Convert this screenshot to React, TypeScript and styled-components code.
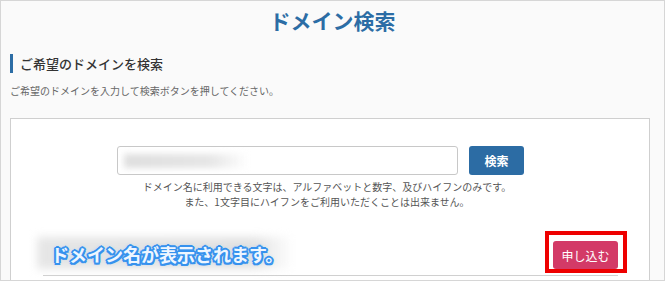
import styled, { createGlobalStyle } from 'styled-components';

const GlobalStyle = createGlobalStyle`
  html, body {
    margin: 0;
    padding: 0;
    background: #fafafa;
  }
  body {
    font-family: "Noto Sans CJK JP", "Noto Sans", sans-serif;
  }
`;

const Page = styled.div`
  box-sizing: border-box;
  width: 665px;
  height: 281px;
  overflow: hidden;
  border: 1px solid #d6d6d6;
  background: #fafafa;
  padding: 0 14px 0 9px;
`;

const Title = styled.h1`
  margin: 7px 0 0;
  font-size: 21px;
  line-height: 25px;
  font-weight: bold;
  color: #2c6da5;
  text-align: center;
  padding-left: 5px;
`;

const Heading = styled.h2`
  margin: 21px 0 0;
  border-left: 3px solid #2c6da5;
  padding-left: 7px;
  font-size: 13px;
  line-height: 19px;
  font-weight: 500;
  color: #333;
`;

const Lead = styled.p`
  margin: 11px 0 0;
  font-size: 10px;
  line-height: 14px;
  color: #666;
`;

const Box = styled.section`
  margin-top: 20px;
  background: #fff;
  border: 1px solid #cfcfcf;
  padding-top: 27px;
  height: 200px;
`;

const SearchRow = styled.div`
  display: flex;
  justify-content: center;
  gap: 11px;
  padding-right: 19px;
`;

const Field = styled.div`
  box-sizing: border-box;
  width: 341px;
  height: 29px;
  border: 1px solid #c8c8c8;
  border-radius: 3px;
  background: #fff;
  display: flex;
  align-items: center;
  padding-left: 6px;
  overflow: hidden;
`;

const Blurred = styled.div`
  width: 124px;
  height: 14px;
  background: linear-gradient(90deg, #dedede, #e6e6e6 70%, rgba(240, 240, 240, 0));
  filter: blur(3px);
`;

const Button = styled.button<{ $tone: 'blue' | 'pink' }>`
  box-sizing: border-box;
  border: none;
  border-radius: 3px;
  color: #fff;
  font-family: inherit;
  font-size: 12px;
  font-weight: ${({ $tone }) => ($tone === 'blue' ? 'bold' : 'normal')};
  background: ${({ $tone }) => ($tone === 'blue' ? '#2c6ca4' : '#d33a67')};
  width: ${({ $tone }) => ($tone === 'blue' ? '55px' : '65px')};
  height: ${({ $tone }) => ($tone === 'blue' ? '29px' : '28px')};
  padding: 0;
  cursor: pointer;
`;

const Notes = styled.div`
  margin-top: 4px;
  padding-right: 6px;
  text-align: center;
  font-size: 10px;
  line-height: 15px;
  color: #555;
`;

const ResultRow = styled.div`
  margin: 32px 31px 0 32px;
  padding: 0 0 6px 8px;
  border-bottom: 1px solid #d0d0d0;
  display: flex;
  align-items: center;
  justify-content: space-between;
`;

const SampleWrap = styled.div`
  position: relative;
  z-index: 0;
`;

const Sample = styled.span`
  position: relative;
  margin-top: -5px;
  font-size: 18px;
  line-height: 22px;
  font-weight: bold;
  color: #eef6ff;
  text-shadow:
    2px 0 0 #3692ee, -2px 0 0 #3692ee, 0 2px 0 #3692ee, 0 -2px 0 #3692ee,
    1.5px 1.5px 0 #3692ee, -1.5px -1.5px 0 #3692ee, 1.5px -1.5px 0 #3692ee, -1.5px 1.5px 0 #3692ee,
    1px 0 0 #3692ee, -1px 0 0 #3692ee, 0 1px 0 #3692ee, 0 -1px 0 #3692ee,
    0 0 4px #7ab9f5;

  &::before {
    content: '';
    position: absolute;
    left: -14px;
    right: -10px;
    top: -4px;
    bottom: -2px;
    background: linear-gradient(90deg, #e6e6e6, #e2e2e2 85%, rgba(230, 230, 230, 0));
    filter: blur(4px);
    z-index: -1;
  }
`;

const Highlight = styled.div`
  position: relative;

  &::after {
    content: '';
    position: absolute;
    left: -8px;
    right: -9px;
    top: -10px;
    bottom: -4px;
    border: 4px solid #ee0000;
    box-sizing: border-box;
    pointer-events: none;
  }
`;

export default function App() {
  return (
    <>
      <GlobalStyle />
      <Page>
        <Title>ドメイン検索</Title>
        <Heading>ご希望のドメインを検索</Heading>
        <Lead>ご希望のドメインを入力して検索ボタンを押してください。</Lead>
        <Box>
          <SearchRow>
            <Field>
              <Blurred />
            </Field>
            <Button $tone="blue">検索</Button>
          </SearchRow>
          <Notes>
            ドメイン名に利用できる文字は、アルファベットと数字、及びハイフンのみです。
            <br />
            また、1文字目にハイフンをご利用いただくことは出来ません。
          </Notes>
          <ResultRow>
            <SampleWrap>
              <Sample>ドメイン名が表示されます。</Sample>
            </SampleWrap>
            <Highlight>
              <Button $tone="pink">申し込む</Button>
            </Highlight>
          </ResultRow>
        </Box>
      </Page>
    </>
  );
}
